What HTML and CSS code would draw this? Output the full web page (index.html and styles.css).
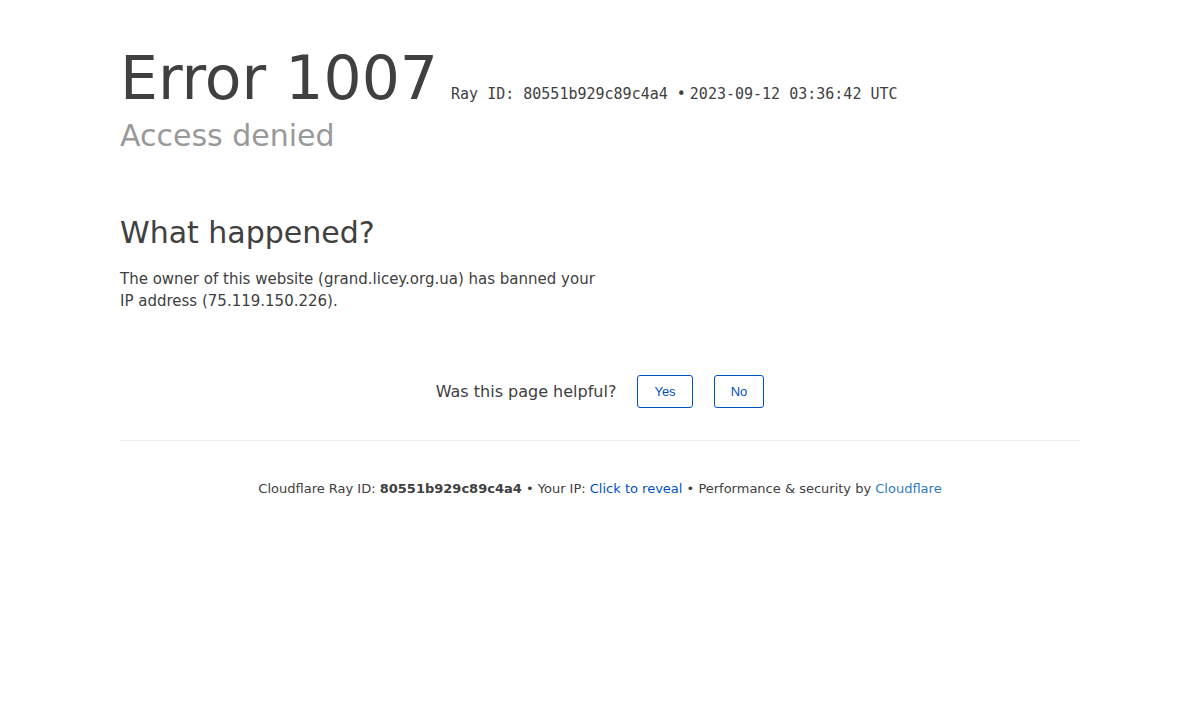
FILE: index.html
```html
<!DOCTYPE html>
<html lang="en">
<head>
<meta charset="utf-8">
<title>Access denied | grand.licey.org.ua used Cloudflare to restrict access</title>
<link rel="stylesheet" href="styles.css">
</head>
<body>
<div class="wrapper">
  <header class="header">
    <h1 class="headline"><span class="error-label">Error</span> <span class="error-code">1007</span><small class="ray-id">Ray ID: 80551b929c89c4a4 &bull;<span class="ray-date">2023-09-12 03:36:42 UTC</span></small></h1>
    <h2 class="subheadline">Access denied</h2>
  </header>

  <section class="section">
    <div class="columns">
      <div class="column">
        <h2 class="section-title">What happened?</h2>
        <p class="section-text">The owner of this website (grand.licey.org.ua) has banned your IP address (75.119.150.226).</p>
      </div>
      <div class="column"></div>
    </div>
  </section>

  <div class="feedback">
    <span class="feedback-question">Was this page helpful?</span>
    <button class="feedback-btn" type="button">Yes</button>
    <button class="feedback-btn" type="button">No</button>
  </div>

  <footer class="footer">
    <p class="footer-text">
      <span>Cloudflare Ray ID: <strong class="footer-ray">80551b929c89c4a4</strong></span>
      <span class="sep">&bull;</span>
      <span>Your IP: <a class="reveal" href="#">Click to reveal</a></span>
      <span class="sep">&bull;</span>
      <span>Performance &amp; security by <a class="brand" href="#">Cloudflare</a></span>
    </p>
  </footer>
</div>
</body>
</html>
```

FILE: styles.css
```css
* { box-sizing: border-box; }

html, body {
  margin: 0;
  padding: 0;
  background: #fff;
}

body {
  font-family: "DejaVu Sans", sans-serif;
  color: #404040;
  font-size: 15px;
}

.wrapper {
  width: 960px;
  margin: 0 auto;
  padding-top: 40px;
}

.headline {
  margin: 0;
  font-size: 60px;
  line-height: 76px;
  font-weight: 400;
  color: #404040;
}

.ray-id {
  font-family: "DejaVu Sans Mono", monospace;
  font-size: 15px;
  line-height: 20px;
  color: #404040;
  margin-left: 13px;
}

.ray-date {
  margin-left: 4px;
}

.subheadline {
  margin: 0;
  font-size: 30px;
  line-height: 40px;
  font-weight: 400;
  color: #999;
}

.section {
  margin-top: 57px;
}

.columns {
  display: grid;
  grid-template-columns: 1fr 1fr;
  gap: 0;
}

.column {
  padding-right: 2px;
}

.section-title {
  margin: 0;
  font-size: 30px;
  line-height: 40px;
  font-weight: 400;
  color: #404040;
}

.section-text {
  margin: 15px 0 0;
  font-size: 15px;
  line-height: 22px;
  color: #404040;
}

.feedback {
  margin-top: 63px;
  display: flex;
  justify-content: center;
  align-items: center;
  gap: 21px;
  padding-bottom: 32px;
  border-bottom: 1px solid #ebebeb;
}

.feedback-question {
  font-size: 16px;
  color: #404040;
}

.feedback-btn {
  font-family: "Liberation Sans", Arial, sans-serif;
  font-size: 13px;
  line-height: 18px;
  color: #0051c3;
  background: #fff;
  border: 1px solid #0051c3;
  border-radius: 3px;
  padding: 7px 16px;
  height: 33px;
  cursor: pointer;
}

.footer {
  padding-top: 39px;
  text-align: center;
}

.footer-text {
  margin: 0;
  font-size: 13px;
  line-height: 18px;
  color: #404040;
}

.footer-ray {
  font-weight: 700;
}

.reveal {
  color: #0051c3;
  text-decoration: none;
}

.brand {
  color: #2f7bbf;
  text-decoration: none;
}
```
